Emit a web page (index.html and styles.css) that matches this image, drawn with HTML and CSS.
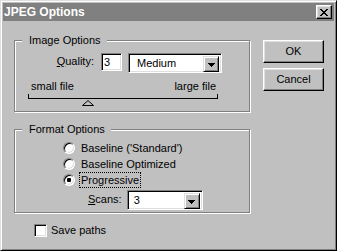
FILE: index.html
```html
<!DOCTYPE html>
<html>
<head>
<meta charset="utf-8">
<link rel="stylesheet" href="styles.css">
</head>
<body>
<div class="win">
  <div class="titlebar">
    <span class="title">JPEG Options</span>
    <span class="close">
      <svg width="8" height="7" viewBox="0 0 8 7" shape-rendering="crispEdges">
        <rect x="0" y="0" width="2" height="1"/><rect x="6" y="0" width="2" height="1"/>
        <rect x="1" y="1" width="2" height="1"/><rect x="5" y="1" width="2" height="1"/>
        <rect x="2" y="2" width="4" height="1"/>
        <rect x="3" y="3" width="2" height="1"/>
        <rect x="2" y="4" width="4" height="1"/>
        <rect x="1" y="5" width="2" height="1"/><rect x="5" y="5" width="2" height="1"/>
        <rect x="0" y="6" width="2" height="1"/><rect x="6" y="6" width="2" height="1"/>
      </svg>
    </span>
  </div>
  <div class="content">
    <div class="main">
      <div class="group g1">
        <div class="legend">Image Options</div>
        <div class="quality-row">
          <span class="qlabel"><u>Q</u>uality:</span>
          <div class="edit">3</div>
          <div class="combo medium">
            <span class="combo-text">Medium</span>
            <span class="drop"><svg width="7" height="4" viewBox="0 0 7 4" shape-rendering="crispEdges"><rect x="0" y="0" width="7" height="1"/><rect x="1" y="1" width="5" height="1"/><rect x="2" y="2" width="3" height="1"/><rect x="3" y="3" width="1" height="1"/></svg></span>
          </div>
        </div>
        <div class="slider-labels"><span>small file</span><span>large file</span></div>
        <div class="track"></div>
        <svg class="thumb" width="12" height="6" viewBox="0 0 12 6"><polygon points="0.5,5.5 6,0.5 11.5,5.5" fill="none" stroke="#000" stroke-width="1"/></svg>
      </div>
      <div class="group g2">
        <div class="legend">Format Options</div>
        <div class="radios">
          <div class="radio-row"><span class="radio"></span><span class="rlabel">Baseline ('Standard')</span></div>
          <div class="radio-row"><span class="radio"></span><span class="rlabel">Baseline Optimized</span></div>
          <div class="radio-row"><span class="radio checked"></span><span class="rlabel focus">Progressive</span></div>
        </div>
        <div class="scans-row">
          <span class="slabel"><u>S</u>cans:</span>
          <div class="combo scans">
            <span class="combo-text">3</span>
            <span class="drop"><svg width="7" height="4" viewBox="0 0 7 4" shape-rendering="crispEdges"><rect x="0" y="0" width="7" height="1"/><rect x="1" y="1" width="5" height="1"/><rect x="2" y="2" width="3" height="1"/><rect x="3" y="3" width="1" height="1"/></svg></span>
          </div>
        </div>
      </div>
      <div class="check-row"><span class="checkbox"></span><span class="clabel">Save paths</span></div>
    </div>
    <div class="buttons">
      <div class="btn">OK</div>
      <div class="btn">Cancel</div>
    </div>
  </div>
</div>
</body>
</html>
```
FILE: styles.css
```css
* { box-sizing: border-box; }
html, body { margin: 0; padding: 0; background: #c0c0c0; }
body { font: 11px/13px "Liberation Sans", Arial, sans-serif; color: #000; }
u { text-underline-offset: 1px; }

.win {
  width: 337px; height: 251px;
  border: 1px solid; border-color: #dfdfdf #000 #000 #dfdfdf;
  box-shadow: inset 1px 1px #fff, inset -1px -1px #808080;
  padding: 2px; background: #c0c0c0;
  display: flex; flex-direction: column;
}
.titlebar {
  height: 18px; flex: none; background: #808080;
  display: flex; align-items: center; justify-content: space-between;
  padding: 0 2px 0 1px;
}
.title { color: #fff; font-weight: bold; font-size: 12px; line-height: 14px; }
.close {
  width: 16px; height: 14px; background: #c0c0c0;
  border: 1px solid; border-color: #fff #000 #000 #fff;
  box-shadow: inset -1px -1px #808080, inset 1px 1px #dfdfdf;
  display: flex; align-items: center; justify-content: center;
}
.close svg { display: block; }

.content { flex: 1; display: flex; padding: 19px 0 0 11px; }
.main { width: 236px; display: flex; flex-direction: column; }

.group {
  border: 1px solid #808080;
  box-shadow: 1px 1px #fff, inset 1px 1px #fff;
  display: flex; flex-direction: column; align-items: flex-start;
}
.g1 { height: 72px; }
.g2 { height: 84px; margin-top: 17px; }
.legend { margin: -7px 0 0 7px; padding: 0 6px 0 7px; background: #c0c0c0; }

.quality-row { display: flex; margin-top: 6px; height: 20px; align-items: flex-start; }
.qlabel { width: 79px; text-align: right; margin-top: 2px; }
.edit {
  margin-left: 7px; width: 21px; height: 18px; background: #fff;
  border: 1px solid; border-color: #808080 #fff #fff #808080;
  box-shadow: inset 1px 1px #000, inset -1px -1px #dfdfdf;
  padding: 2px 0 0 2px;
}
.combo {
  height: 20px; background: #fff;
  border: 1px solid; border-color: #808080 #fff #fff #808080;
  box-shadow: inset 1px 1px #000, inset -1px -1px #dfdfdf;
  padding: 2px; display: flex; align-items: flex-start;
}
.combo.medium { margin-left: 6px; width: 94px; }
.combo-text { flex: 1; padding: 1px 0 0 6px; }
.combo.scans .combo-text { padding-left: 4px; }
.drop {
  width: 16px; height: 16px; background: #c0c0c0;
  border: 1px solid; border-color: #dfdfdf #000 #000 #dfdfdf;
  box-shadow: inset 1px 1px #fff, inset -1px -1px #808080;
  display: flex; align-items: center; justify-content: center;
}
.drop svg { display: block; margin-top: 1px; }

.slider-labels {
  margin-top: 7px; align-self: stretch;
  display: flex; justify-content: space-between;
  padding: 0 33px 0 16px;
}
.track {
  margin: 1px 0 0 13px; width: 190px; height: 5px;
  border: 1px solid #000; border-top: none;
}
.thumb { display: block; margin: 1px 0 0 67px; }

.radios { margin: 4px 0 0 48px; display: flex; flex-direction: column; }
.radio-row { height: 16px; display: flex; align-items: center; }
.radio {
  width: 12px; height: 12px; border-radius: 50%; background: #fff;
  border: 1px solid; border-color: #808080 #fff #fff #808080;
  box-shadow: inset 1px 1px #000, inset -1px -1px #dfdfdf;
  margin-right: 4px; position: relative;
  display: flex; align-items: center; justify-content: center;
}
.radio.checked::after {
  content: ""; width: 4px; height: 4px; background: #000; border-radius: 1px;
}
.rlabel { border: 1px solid transparent; padding: 1px 1px 0 1px; line-height: 13px; }
.rlabel.focus { border: 1px dotted #000; }

.scans-row { margin: 2px 0 0 73px; display: flex; height: 20px; align-items: flex-start; }
.slabel { margin-top: 3px; }
.combo.scans { margin-left: 5px; width: 76px; }

.check-row { margin: 11px 0 0 20px; display: flex; align-items: center; height: 13px; }
.checkbox {
  width: 13px; height: 13px; background: #fff;
  border: 1px solid; border-color: #808080 #fff #fff #808080;
  box-shadow: inset 1px 1px #000, inset -1px -1px #dfdfdf;
  margin-right: 4px;
}

.buttons { margin-left: 13px; display: flex; flex-direction: column; }
.btn {
  width: 61px; height: 23px; text-align: center; line-height: 20px;
  border: 1px solid; border-color: #fff #000 #000 #fff;
  box-shadow: inset -1px -1px #808080, inset 1px 1px #dfdfdf;
}
.btn + .btn { margin-top: 5px; }
```
